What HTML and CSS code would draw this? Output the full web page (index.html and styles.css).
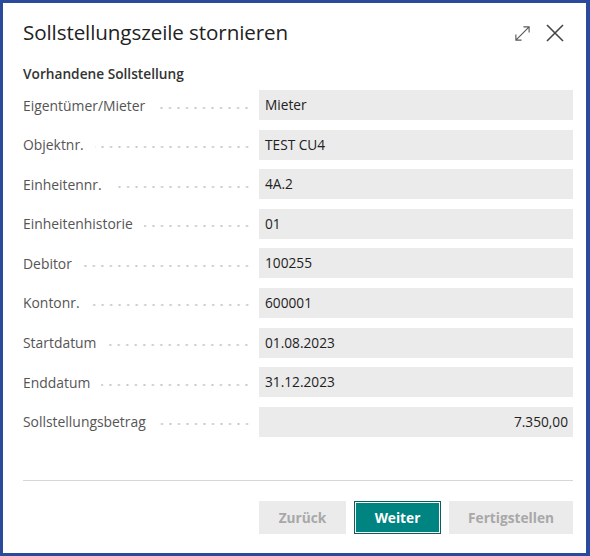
FILE: index.html
```
<!DOCTYPE html>
<html lang="de">
<head>
<meta charset="utf-8">
<title>Sollstellungszeile stornieren</title>
<link rel="stylesheet" href="styles.css">
</head>
<body>
<div class="dialog">
  <header class="header">
    <h1 class="title">Sollstellungszeile stornieren</h1>
    <div class="tools">
      <svg class="icon expand" viewBox="0 0 18 18" width="18" height="18" aria-hidden="true">
        <path d="M2 16 L16 2 M10 2 H16 V8 M2 10 V16 H8" fill="none" stroke="#5a5a5a" stroke-width="1.2"/>
      </svg>
      <svg class="icon close" viewBox="0 0 20 20" width="20" height="20" aria-hidden="true">
        <path d="M2 2 L18 18 M18 2 L2 18" fill="none" stroke="#444" stroke-width="1.6"/>
      </svg>
    </div>
  </header>
  <h2 class="section">Vorhandene Sollstellung</h2>
  <div class="fields">
    <div class="row"><span class="label">Eigentümer/Mieter</span><span class="leader"></span><span class="value">Mieter</span></div>
    <div class="row"><span class="label">Objektnr.</span><span class="leader"></span><span class="value">TEST CU4</span></div>
    <div class="row"><span class="label">Einheitennr.</span><span class="leader"></span><span class="value">4A.2</span></div>
    <div class="row"><span class="label">Einheitenhistorie</span><span class="leader"></span><span class="value">01</span></div>
    <div class="row"><span class="label">Debitor</span><span class="leader"></span><span class="value">100255</span></div>
    <div class="row"><span class="label">Kontonr.</span><span class="leader"></span><span class="value">600001</span></div>
    <div class="row"><span class="label">Startdatum</span><span class="leader"></span><span class="value">01.08.2023</span></div>
    <div class="row"><span class="label">Enddatum</span><span class="leader"></span><span class="value">31.12.2023</span></div>
    <div class="row"><span class="label">Sollstellungsbetrag</span><span class="leader"></span><span class="value num">7.350,00</span></div>
  </div>
  <footer class="footer">
    <button class="btn disabled back" type="button">Zurück</button>
    <button class="btn primary next" type="button">Weiter</button>
    <button class="btn disabled finish" type="button">Fertigstellen</button>
  </footer>
</div>
</body>
</html>
```
FILE: styles.css
```
html, body {
  margin: 0;
  padding: 0;
  background: #ffffff;
}

.dialog {
  box-sizing: border-box;
  width: 590px;
  height: 556px;
  border: 3px solid #2b4a9b;
  border-right-width: 4px;
  padding: 0 13px 0 20px;
  font-family: "Open Sans", "Noto Sans", sans-serif;
  color: #212121;
  display: flex;
  flex-direction: column;
}

.header {
  display: flex;
  align-items: center;
  justify-content: space-between;
  padding-top: 15px;
  height: 28px;
}

.title {
  margin: 0;
  font-size: 20.6px;
  font-weight: 400;
  line-height: 28px;
  color: #222;
  letter-spacing: -0.1px;
}

.tools {
  display: flex;
  align-items: center;
  gap: 14px;
  margin-right: 8px;
  margin-top: 2px;
}

.icon { display: block; }
.expand { width: 17px; height: 17px; }

.section {
  margin: 18px 0 0 0;
  font-size: 13.7px;
  font-weight: 600;
  line-height: 20px;
  color: #333;
}

.fields {
  display: flex;
  flex-direction: column;
  gap: 9.6px;
  margin-top: 6px;
}

.row {
  display: flex;
  align-items: center;
  height: 30px;
}

.label {
  font-size: 13.9px;
  color: #555;
  white-space: nowrap;
  padding-right: 11px;
}

.leader {
  flex: 1;
  height: 4px;
  margin-right: 8px;
  margin-top: 5px;
  background-image: radial-gradient(circle, #c9c9c9 0.9px, transparent 1.3px);
  background-size: 8.5px 4px;
  background-repeat: repeat-x;
  background-position: right center;
}

.value {
  box-sizing: border-box;
  width: 314px;
  flex: none;
  height: 30px;
  line-height: 30px;
  background: #ebebeb;
  padding: 0 6px;
  font-size: 13.7px;
  color: #222;
}

.value.num { text-align: right; padding-right: 5px; }

.footer {
  margin-top: 43px;
  border-top: 1px solid #d6d6d6;
  padding-top: 20px;
  display: flex;
  justify-content: flex-end;
  gap: 8px;
}

.btn {
  box-sizing: border-box;
  height: 33px;
  border: none;
  font-family: inherit;
  font-size: 13.7px;
  font-weight: 700;
  padding: 0;
}

.disabled {
  background: #ebebeb;
  color: #a8a8a8;
}

.back { width: 87px; }
.finish { width: 124px; }

.primary {
  width: 87px;
  background: #008481;
  color: #ffffff;
  border: 1px solid #0a5e5c;
  box-shadow: inset 0 0 0 1px #ffffff;
}
```
